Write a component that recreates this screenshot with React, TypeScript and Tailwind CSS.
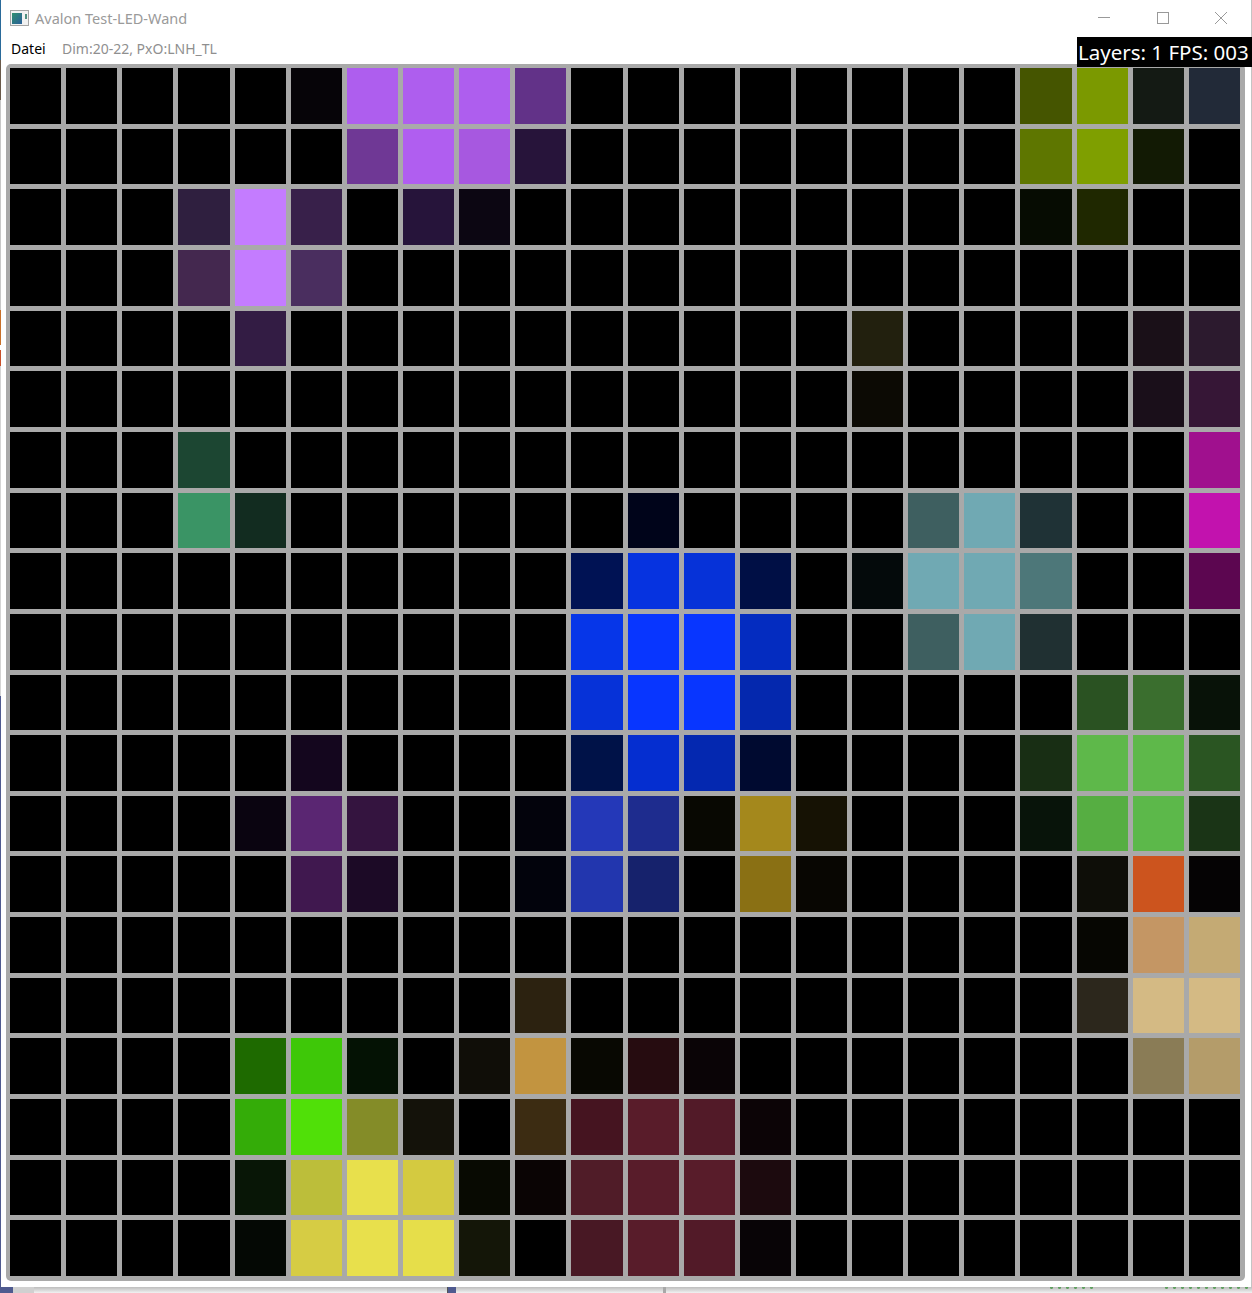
import React from "react";

const ROWS = 20;
const COLS = 22;

// lit pixels, everything else stays black: "row-col": colour
const leds: Record<string, string> = {
  "0-5": "#060408", "0-6": "#ae5eee", "0-7": "#ae5eee", "0-8": "#ae5eee", "0-9": "#623288",
  "0-18": "#455500", "0-19": "#7b9900", "0-20": "#141a14", "0-21": "#222a38",
  "1-6": "#6f3895", "1-7": "#b05ef0", "1-8": "#a758e0", "1-9": "#27143a",
  "1-18": "#5e7600", "1-19": "#7f9f00", "1-20": "#121a04",
  "2-3": "#2f1f3f", "2-4": "#c47cff", "2-5": "#38204a", "2-7": "#26143a", "2-8": "#0c0612",
  "2-18": "#060c02", "2-19": "#1f2800",
  "3-3": "#44284f", "3-4": "#c47cff", "3-5": "#4a2e5f",
  "4-4": "#331c44", "4-15": "#22200e", "4-20": "#1a1018", "4-21": "#2c1a2e",
  "5-15": "#0c0a04", "5-20": "#1a0f1a", "5-21": "#361636",
  "6-3": "#1c4632", "6-21": "#a0108e",
  "7-3": "#3a9465", "7-4": "#122c20", "7-11": "#00041a", "7-16": "#3e5f60", "7-17": "#70a9b3",
  "7-18": "#1f3236", "7-21": "#c212ae",
  "8-10": "#001254", "8-11": "#0633e0", "8-12": "#0632d8", "8-13": "#000f45", "8-15": "#040a0b",
  "8-16": "#70a9b3", "8-17": "#70a9b3", "8-18": "#4d7779", "8-21": "#5c0650",
  "9-10": "#0636e8", "9-11": "#0836ff", "9-12": "#0836ff", "9-13": "#042cc0",
  "9-16": "#3e5f60", "9-17": "#70a9b3", "9-18": "#203032",
  "10-10": "#0632d8", "10-11": "#0836ff", "10-12": "#0836ff", "10-13": "#0428ae",
  "10-19": "#2a5222", "10-20": "#3a6e2e", "10-21": "#081208",
  "11-5": "#14061e", "11-10": "#001248", "11-11": "#052ed0", "11-12": "#0428b0", "11-13": "#000a30",
  "11-18": "#182e14", "11-19": "#5eb84a", "11-20": "#5eb84a", "11-21": "#2a5522",
  "12-4": "#0a0410", "12-5": "#5a2672", "12-6": "#34143f", "12-9": "#03030c", "12-10": "#2438b8",
  "12-11": "#1e2c8e", "12-12": "#080802", "12-13": "#a4881c", "12-14": "#161204",
  "12-18": "#08140a", "12-19": "#56ae42", "12-20": "#5cb84a", "12-21": "#1a3416",
  "13-5": "#40184f", "13-6": "#1c0a26", "13-9": "#02030c", "13-10": "#2236ae", "13-11": "#16226c",
  "13-13": "#8a7014", "13-14": "#080602", "13-19": "#0e0e08", "13-20": "#cc541e", "13-21": "#050304",
  "14-19": "#060602", "14-20": "#c49664", "14-21": "#c4aa74",
  "15-9": "#2c2210", "15-19": "#2c271c", "15-20": "#d4ba84", "15-21": "#d4ba84",
  "16-4": "#1e6a00", "16-5": "#3ec808", "16-6": "#041204", "16-8": "#100e08", "16-9": "#c29440",
  "16-10": "#080802", "16-11": "#260c10", "16-12": "#0a0406", "16-20": "#8a7c56", "16-21": "#b49c6a",
  "17-4": "#34ac08", "17-5": "#50e008", "17-6": "#848c28", "17-7": "#14120a", "17-9": "#3c2c12",
  "17-10": "#451420", "17-11": "#591c2a", "17-12": "#521a28", "17-13": "#0c0406",
  "18-4": "#081606", "18-5": "#bcbe3a", "18-6": "#e8e04c", "18-7": "#d4ca40", "18-8": "#080a02",
  "18-9": "#0a0404", "18-10": "#501c28", "18-11": "#581c2a", "18-12": "#581c2a", "18-13": "#1c0a0e",
  "19-4": "#040804", "19-5": "#d6cc44", "19-6": "#e8e04c", "19-7": "#e6de4a", "19-8": "#141608",
  "19-10": "#481824", "19-11": "#581c2a", "19-12": "#521a28", "19-13": "#080406",
};

function AppIcon() {
  return (
    <svg width="19" height="16" viewBox="0 0 19 16">
      <defs>
        <linearGradient id="pane" x1="0" y1="0" x2="1" y2="1">
          <stop offset="0" stopColor="#2f8f6f" />
          <stop offset="1" stopColor="#2a5f9a" />
        </linearGradient>
      </defs>
      <rect x="0.5" y="0.5" width="18" height="15" fill="#f1f1f1" stroke="#a5a5a5" />
      <rect x="2" y="3" width="10" height="11" fill="url(#pane)" />
      <rect x="15" y="4" width="2" height="5" fill="#4f8f7f" />
    </svg>
  );
}

function WindowControls() {
  return (
    <div className="flex items-center mr-[1px] text-[#999999]">
      <div className="w-[58px] h-[36px] flex items-center justify-center">
        <svg width="12" height="12" viewBox="0 0 12 12" stroke="currentColor" fill="none">
          <path d="M0 5.5h12" />
        </svg>
      </div>
      <div className="w-[59px] h-[36px] flex items-center justify-center">
        <svg width="12" height="12" viewBox="0 0 12 12" stroke="currentColor" fill="none">
          <rect x="0.5" y="0.5" width="11" height="11" />
        </svg>
      </div>
      <div className="w-[58px] h-[36px] flex items-center justify-center">
        <svg width="12" height="12" viewBox="0 0 12 12" stroke="currentColor" fill="none">
          <path d="M0 0l12 12M12 0L0 12" />
        </svg>
      </div>
    </div>
  );
}

// green squiggle of the window behind
function Squiggle({ count }: { count: number }) {
  return (
    <div className="flex gap-[5px] items-start">
      {Array.from({ length: count }, (_, i) => (
        <div key={i} className="w-[3px] h-[2px] rounded-b-full bg-[#5f9f5f]" />
      ))}
    </div>
  );
}

export default function App() {
  const cells = [];
  for (let r = 0; r < ROWS; r++) {
    for (let c = 0; c < COLS; c++) {
      cells.push(
        <div key={`${r}-${c}`} style={{ backgroundColor: leds[`${r}-${c}`] ?? "#000000" }} />
      );
    }
  }

  return (
    <div className="relative w-[1252px] h-[1293px] overflow-hidden bg-white flex flex-col font-['Noto_Sans','Open_Sans',sans-serif]">
      <div className="flex-1 min-h-0 flex">
        {/* desktop peeking out left of the window */}
        <div className="w-[1px] flex flex-col bg-[#4f5a8f]">
          <div className="h-[60px] bg-[#2a6a9a]" />
          <div className="h-[40px] bg-[#6a5a4a]" />
          <div className="h-[210px] bg-[#c8c8c8]" />
          <div className="h-[35px] bg-[#c8702a]" />
          <div className="h-[5px] bg-white" />
          <div className="h-[16px] bg-[#c8502a]" />
          <div className="h-[330px] bg-[#d4d4d4]" />
        </div>

        <div className="flex-1 min-w-0 flex flex-col bg-white">
          {/* title bar */}
          <div className="h-[36px] shrink-0 flex items-center justify-between">
            <div className="flex items-center pl-[9px] gap-[6px]">
              <AppIcon />
              <span className="text-[14.5px] leading-none text-[#9a9a9a]">Avalon Test-LED-Wand</span>
            </div>
            <WindowControls />
          </div>

          {/* menu */}
          <div className="h-[28px] shrink-0 flex items-center pl-[10px] pb-[3px] text-[14px] leading-none">
            <span className="text-black w-[51px]">Datei</span>
            <span className="text-[#8f8f8f]">Dim:20-22, PxO:LNH_TL</span>
          </div>

          {/* LED grid */}
          <div className="ml-[5px] mr-[6px] h-[1217px] shrink-0 rounded-[5px] bg-[#a9a9a9] pt-[4px] pl-[4px] pr-[5px] pb-[5px]">
            <div className="grid h-full grid-cols-[repeat(22,1fr)] grid-rows-[repeat(20,1fr)] gap-[5px]">
              {cells}
            </div>
          </div>
        </div>

        <div className="w-px bg-[#c4c4c4]" />
      </div>

      {/* desktop peeking out below the window */}
      <div className="h-[6px] shrink-0 flex bg-gradient-to-b from-[#bdbdbd] to-[#f2f2f2]">
        <div className="w-[13px] bg-[#4f5a8f]" />
        <div className="w-[21px] bg-[#d0d0d0]" />
        <div className="w-[413px]" />
        <div className="w-[1px] bg-[#555555]" />
        <div className="w-[8px] bg-[#4f5a8f]" />
        <div className="w-[207px]" />
        <div className="w-[3px] bg-[#a8a8a8]" />
        <div className="w-[384px]" />
        <Squiggle count={6} />
        <div className="w-[72px]" />
        <Squiggle count={11} />
      </div>

      {/* diagnostics overlay */}
      <div className="absolute right-0 top-[37px] w-[175px] h-[30px] bg-black text-white text-[20.5px] leading-[30px] whitespace-nowrap pl-[1px]">
        Layers: 1 FPS: 003
      </div>
    </div>
  );
}
